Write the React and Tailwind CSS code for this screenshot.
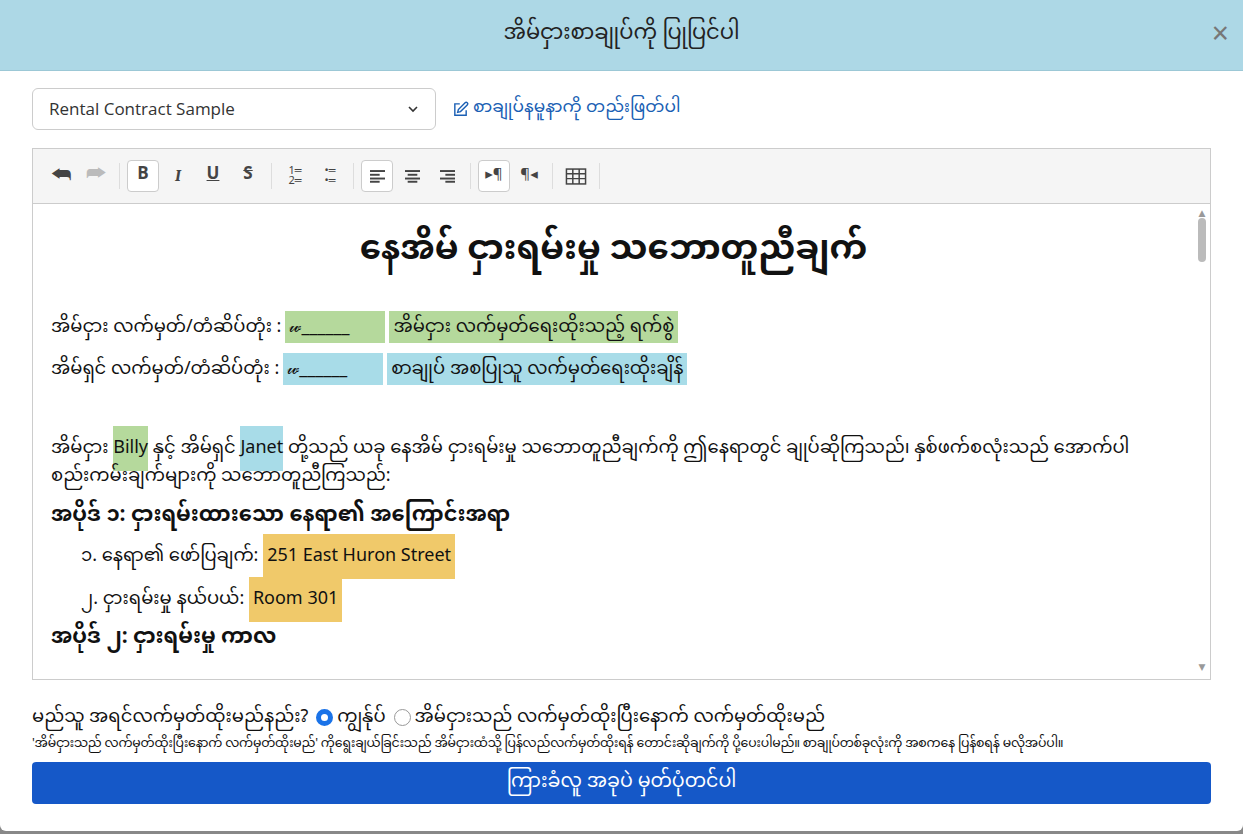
import React from "react";

const F = { fontFamily: '"Noto Sans Myanmar","Padauk","Noto Sans","DejaVu Sans",sans-serif' };

function Btn({ children, active }) {
  return (
    <div className={`h-[32px] min-w-[32px] px-1 flex items-center justify-center text-[#444] text-[17px] ${active ? "border border-[#ccc] bg-white rounded-sm" : ""}`}>{children}</div>
  );
}
const Sep = () => <div className="w-px h-[26px] bg-[#ddd] mx-1" />;
const Lines = ({ type }) => (
  <svg width="15" height="13" viewBox="0 0 14 12" fill="#444">
    {type === "left" && <><rect x="0" y="0" width="14" height="1.8"/><rect x="0" y="3.5" width="9" height="1.8"/><rect x="0" y="7" width="14" height="1.8"/><rect x="0" y="10" width="9" height="1.8"/></>}
    {type === "center" && <><rect x="0" y="0" width="14" height="1.8"/><rect x="2.5" y="3.5" width="9" height="1.8"/><rect x="0" y="7" width="14" height="1.8"/><rect x="2.5" y="10" width="9" height="1.8"/></>}
    {type === "right" && <><rect x="0" y="0" width="14" height="1.8"/><rect x="5" y="3.5" width="9" height="1.8"/><rect x="0" y="7" width="14" height="1.8"/><rect x="5" y="10" width="9" height="1.8"/></>}
  </svg>
);

export default function App() {
  return (
    <div className="w-[1243px] h-[834px] bg-[#888] overflow-hidden" style={F}>
      <div className="w-[1243px] h-[831px] bg-white rounded-b-md flex flex-col">
        <div className="h-[71px] bg-[#add8e6] relative flex items-center justify-center border-b border-[#9cc8d6]">
          <span className="text-[21px] text-[#222]">အိမ်ငှားစာချုပ်ကို ပြုပြင်ပါ</span>
          <span className="absolute right-[14px] top-[22px] text-[30px] leading-none text-[#777]">×</span>
        </div>
        <div className="px-[32px] pt-[17px] flex flex-col">
          <div className="flex items-center gap-4">
            <div className="w-[404px] h-[42px] border border-[#ccc] rounded-md flex items-center justify-between px-4 text-[17px] text-[#333]" style={{ fontFamily: '"Open Sans",sans-serif' }}>
              <span>Rental Contract Sample</span>
              <svg width="12" height="8" viewBox="0 0 12 8"><path d="M2 2l4 4 4-4" stroke="#333" strokeWidth="1.6" fill="none"/></svg>
            </div>
            <span className="text-[#1a5fb4] text-[17px] flex items-center gap-1">
              <svg width="17" height="17" viewBox="0 0 24 24" fill="none" stroke="#1a5fb4" strokeWidth="2"><path d="M11 4H4v16h16v-7"/><path d="M18.5 2.5a2.1 2.1 0 013 3L12 15l-4 1 1-4z"/></svg>
              စာချုပ်နမူနာကို တည်းဖြတ်ပါ
            </span>
          </div>
          <div className="mt-[18px] h-[532px] border border-[#ccc] flex flex-col">
            <div className="h-[55px] bg-[#f5f5f5] border-b border-[#ccc] flex items-center px-[12px] gap-[3px]">
              <Btn><span className="text-[22px]">⮪</span></Btn>
              <Btn><span className="text-[22px] text-[#bbb]">⮫</span></Btn>
              <Sep/>
              <Btn active><b>B</b></Btn>
              <Btn><i className="font-serif font-bold">I</i></Btn>
              <Btn><u className="font-bold">U</u></Btn>
              <Btn><s className="font-bold">S</s></Btn>
              <Sep/>
              <Btn><span className="text-[11px] leading-[10px]">1═<br/>2═</span></Btn>
              <Btn><span className="text-[11px] leading-[10px]">•═<br/>•═</span></Btn>
              <Sep/>
              <Btn active><Lines type="left"/></Btn>
              <Btn><Lines type="center"/></Btn>
              <Btn><Lines type="right"/></Btn>
              <Sep/>
              <Btn active><span className="text-[15px]">▸¶</span></Btn>
              <Btn><span className="text-[15px]">¶◂</span></Btn>
              <Sep/>
              <Btn><svg width="22" height="17" viewBox="0 0 20 16" fill="none" stroke="#444" strokeWidth="1.4"><rect x="1" y="1" width="18" height="14"/><path d="M1 5.5h18M1 10h18M7 1v14M13 1v14"/></svg></Btn>
              <Sep/>
            </div>
            <div className="flex-1 flex overflow-hidden">
              <div className="flex-1 px-[18px] pt-[22px] text-[18px] text-[#111] overflow-hidden">
                <h1 className="text-center text-[34px] font-bold mb-[34px]">နေအိမ် ငှားရမ်းမှု သဘောတူညီချက်</h1>
                <div className="flex items-center gap-1 mb-[10px]">အိမ်ငှား လက်မှတ်/တံဆိပ်တုံး : <span className="bg-[#b5d99c] px-1 w-[100px] h-[32px] flex items-center">𝓌______</span> <span className="bg-[#b5d99c] px-1 h-[32px] flex items-center">အိမ်ငှား လက်မှတ်ရေးထိုးသည့် ရက်စွဲ</span></div>
                <div className="flex items-center gap-1 mb-[50px]">အိမ်ရှင် လက်မှတ်/တံဆိပ်တုံး : <span className="bg-[#a8dce8] px-1 w-[100px] h-[32px] flex items-center">𝓌______</span> <span className="bg-[#a8dce8] px-1 h-[32px] flex items-center">စာချုပ် အစပြုသူ လက်မှတ်ရေးထိုးချိန်</span></div>
                <p className="leading-[28px]">အိမ်ငှား <span className="bg-[#b5d99c] py-[3px]">Billy</span> နှင့် အိမ်ရှင် <span className="bg-[#a8dce8] py-[3px]">Janet</span> တို့သည် ယခု နေအိမ် ငှားရမ်းမှု သဘောတူညီချက်ကို ဤနေရာတွင် ချုပ်ဆိုကြသည်၊ နှစ်ဖက်စလုံးသည် အောက်ပါ<br/>စည်းကမ်းချက်များကို သဘောတူညီကြသည်:</p>
                <h2 className="text-[21px] font-bold mt-[10px]">အပိုဒ် ၁: ငှားရမ်းထားသော နေရာ၏ အကြောင်းအရာ</h2>
                <div className="pl-[30px] mt-[10px]">၁. နေရာ၏ ဖော်ပြချက်: <span className="bg-[#f0c96a] px-1 py-[3px]">251 East Huron Street</span></div>
                <div className="pl-[30px] mt-[16px]">၂. ငှားရမ်းမှု နယ်ပယ်: <span className="bg-[#f0c96a] px-1 py-[3px]">Room 301</span></div>
                <h2 className="text-[21px] font-bold mt-[10px]">အပိုဒ် ၂: ငှားရမ်းမှု ကာလ</h2>
              </div>
              <div className="w-[16px] flex flex-col items-center justify-between py-[4px] text-[#999] text-[9px]">
                <span>▲</span>
                <div className="w-[8px] h-[44px] bg-[#bbb] rounded-full -mt-[4px] mb-auto"></div>
                <span>▼</span>
              </div>
            </div>
          </div>
          <div className="mt-[24px] flex items-center gap-1 text-[18px] text-[#111]">
            မည်သူ အရင်လက်မှတ်ထိုးမည်နည်း?
            <span className="w-[17px] h-[17px] rounded-full border-[5px] border-[#1a73e8] ml-1"></span> ကျွန်ုပ်
            <span className="w-[17px] h-[17px] rounded-full border border-[#999] ml-1"></span> အိမ်ငှားသည် လက်မှတ်ထိုးပြီးနောက် လက်မှတ်ထိုးမည်
          </div>
          <div className="text-[12.5px] mt-[4px] text-[#111] whitespace-nowrap tracking-[-0.2px]">'အိမ်ငှားသည် လက်မှတ်ထိုးပြီးနောက် လက်မှတ်ထိုးမည်' ကိုရွေးချယ်ခြင်းသည် အိမ်ငှားထံသို့ ပြန်လည်လက်မှတ်ထိုးရန် တောင်းဆိုချက်ကို ပို့ပေးပါမည်။ စာချုပ်တစ်ခုလုံးကို အစကနေ ပြန်စရန် မလိုအပ်ပါ။</div>
          <div className="mt-[8px] h-[42px] bg-[#1558c8] rounded-sm flex items-center justify-center text-white text-[19px]">ကြားခံလူ အခုပဲ မှတ်ပုံတင်ပါ</div>
        </div>
      </div>
    </div>
  );
}
